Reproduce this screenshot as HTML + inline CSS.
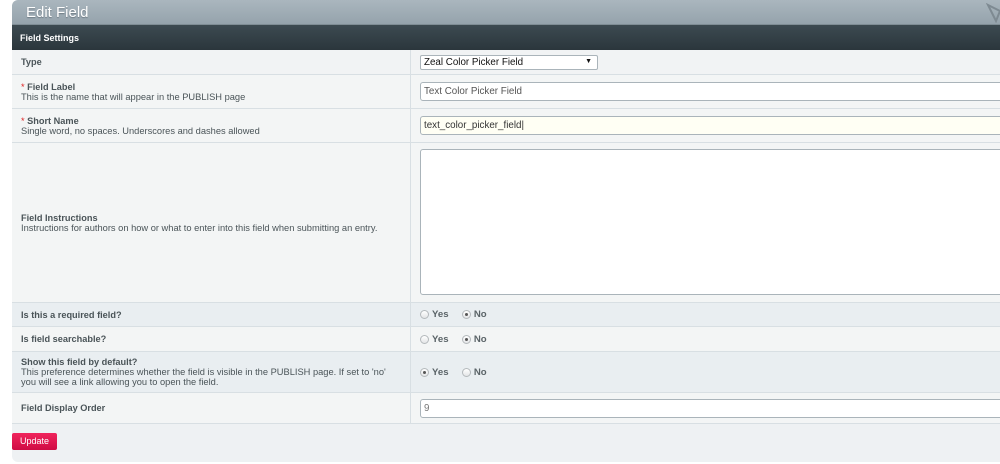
<!DOCTYPE html>
<html><head><style>
*{margin:0;padding:0;box-sizing:border-box}
body{width:1000px;height:464px;background:#fff;font-family:"Liberation Sans",Arial,sans-serif;font-size:9px;color:#4a5458;position:relative;overflow:hidden}
.panel{position:absolute;left:12px;top:0;width:1000px;height:462px;background:#eef1f3;border-radius:6px 0 0 6px;overflow:hidden}
.hdr{position:absolute;left:0;top:0;width:100%;height:25px;background:linear-gradient(#aab6be,#95a3ac);border-bottom:1px solid #7f8d95}
.hdr span{position:absolute;left:14px;top:4px;color:#fff;font-size:15px;text-shadow:0 1px 1px #6b7780}
.bar{position:absolute;left:0;top:25px;width:100%;height:25px;background:linear-gradient(#3c4a51,#2b363c);color:#fff;font-weight:bold;font-size:9px;padding:8px 8px}
.row{position:absolute;left:0;width:100%;border-bottom:1px solid #d8dfe3}
.row .l{position:absolute;left:0;top:0;width:399px;height:100%;border-right:1px solid #d8dfe3;padding-left:9px;display:flex;flex-direction:column;justify-content:center;line-height:10px}
.row b{color:#4a5458;font-weight:bold;font-size:9.2px}
.row .s{font-weight:normal;font-size:9.3px}
.star{color:#d22;font-weight:normal}
.a{background:#f1f3f4}.b{background:#e9eef1}.c{background:#f3f5f5}
.inp{position:absolute;left:408px;background:#fff;border:1px solid #aab4ba;border-radius:3px;font-size:9.8px;color:#555;padding-left:3px}
.radio{position:absolute;left:408px;font-weight:bold;font-size:9.6px;color:#5a6367;display:flex;align-items:center}
.rb{display:inline-block;width:9px;height:9px;border-radius:50%;border:1px solid #b4b9bc;background:linear-gradient(#fff,#e3e5e6);margin-right:3px;position:relative}
.rb.on::after{content:"";position:absolute;left:2px;top:2px;width:3px;height:3px;border-radius:50%;background:#555}
</style></head><body>
<div class="panel">
<div class="hdr"><span>Edit Field</span>
<svg style="position:absolute;left:974px;top:3px" width="20" height="20"><path d="M2 2 L14 8 L10 18 Z" fill="none" stroke="#7e8a92" stroke-width="2"/></svg></div>
<div class="bar">Field Settings</div>
<div class="row a" style="top:50px;height:25px"><div class="l"><b>Type</b></div>
<div class="inp" style="top:5px;height:15px;width:178px;color:#111;border-radius:2px;padding-top:1px">Zeal Color Picker Field<span style="position:absolute;right:5px;font-size:7px;top:2px">▼</span></div></div>
<div class="row c" style="top:75px;height:34px"><div class="l"><b><span class="star">*</span> Field Label</b><span class="s">This is the name that will appear in the PUBLISH page</span></div>
<div class="inp" style="top:7px;height:19px;width:600px;padding-top:3px">Text Color Picker Field</div></div>
<div class="row c" style="top:109px;height:34px"><div class="l"><b><span class="star">*</span> Short Name</b><span class="s">Single word, no spaces. Underscores and dashes allowed</span></div>
<div class="inp" style="top:7px;height:19px;width:600px;padding-top:3px;background:#fffff4;color:#333">text_color_picker_field|</div></div>
<div class="row c" style="top:143px;height:160px"><div class="l"><b>Field Instructions</b><span class="s">Instructions for authors on how or what to enter into this field when submitting an entry.</span></div>
<div class="inp" style="top:6px;height:146px;width:600px"></div></div>
<div class="row b" style="top:303px;height:24px"><div class="l"><b>Is this a required field?</b></div>
<div class="radio" style="top:6px"><span class="rb"></span>Yes&nbsp;&nbsp;&nbsp;&nbsp;&nbsp;<span class="rb on"></span>No</div></div>
<div class="row c" style="top:327px;height:25px"><div class="l"><b>Is field searchable?</b></div>
<div class="radio" style="top:7px"><span class="rb"></span>Yes&nbsp;&nbsp;&nbsp;&nbsp;&nbsp;<span class="rb on"></span>No</div></div>
<div class="row b" style="top:352px;height:41px"><div class="l"><b>Show this field by default?</b><span class="s">This preference determines whether the field is visible in the PUBLISH page. If set to 'no'<br>you will see a link allowing you to open the field.</span></div>
<div class="radio" style="top:15px"><span class="rb on"></span>Yes&nbsp;&nbsp;&nbsp;&nbsp;&nbsp;<span class="rb"></span>No</div></div>
<div class="row c" style="top:393px;height:31px"><div class="l"><b>Field Display Order</b></div>
<div class="inp" style="top:6px;height:19px;width:600px;padding-top:3px;color:#777">9</div></div>
<div style="position:absolute;left:0;top:433px;width:45px;height:17px;background:linear-gradient(#f0245c,#cf0c44);border-radius:2px;color:#fff;font-size:9px;text-align:center;line-height:17px">Update</div>
</div>
</body></html>
